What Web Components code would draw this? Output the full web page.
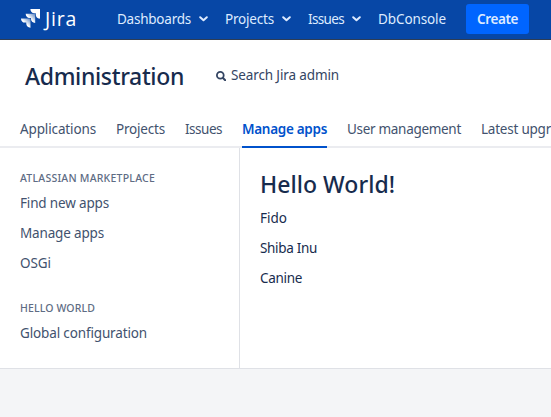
<!DOCTYPE html>
<html lang="en">
<head>
<meta charset="utf-8">
<title>Administration - Jira</title>
<style>
html,body{margin:0;height:100%;overflow:hidden;background:#f4f5f7}
body{font:13.5px/20px "Noto Sans","Open Sans",sans-serif;color:#172b4d}
</style>
</head>
<body>
<jira-page></jira-page>
<script>
const define = (name, html, setup) => customElements.define(name, class extends HTMLElement {
  connectedCallback() {
    if (this.shadowRoot) return;
    const t = document.createElement('template');
    t.innerHTML = html;
    this.attachShadow({mode: 'open'}).append(t.content.cloneNode(true));
    if (setup) setup(this);
  }
});

// Label whose tracking is adjusted so that the text fills the given width.
define('fit-label', `<style>:host{display:block;white-space:nowrap;flex:none}span{display:inline-block}</style><span><slot></slot></span>`, el => {
  const w = +el.getAttribute('w'), s = el.shadowRoot.querySelector('span');
  const d = w - s.getBoundingClientRect().width;
  s.style.letterSpacing = (d / el.textContent.length) + 'px';
  el.style.width = w + 'px';
});

define('jira-logo', `<style>:host{display:flex;gap:5px;width:57px;height:20px;flex:none;color:#fff;font:500 19.500px/20px "Open Sans","Noto Sans",sans-serif}svg{display:block;flex:none}
</style><svg width="19" height="20" viewBox="0 0 19 20">
<defs><linearGradient id="g" x1="1" y1="0" x2="0.25" y2="0.75"><stop offset="0" stop-color="#fff" stop-opacity=".3"/><stop offset=".7" stop-color="#fff"/></linearGradient></defs>
<path fill="#fff" d="M9.400 0H19v9.300a.6.6 0 0 1-.5.4C16.300 9.500 14.800 8 14.800 5.700V4.200h-1.500C11 4.200 9.400 2.500 9.400 0z"/>
<path fill="url(#g)" d="M4.700 4.700h9.500V14c-2.500-.2-4.200-1.700-4.200-4V8.900H8.600C6.300 8.900 4.700 7.200 4.700 4.700z"/>
<path fill="url(#g)" d="M0 9.400h9.500v9.300c-2.500-.2-4.200-1.700-4.200-4v-1.100H3.900C1.600 13.600 0 11.900 0 9.400z"/></svg><fit-label w="32">Jira</fit-label>`);

define('nav-item', `<style>:host{display:flex;align-items:center;gap:8px;flex:none}svg{display:none}:host([menu]) svg{display:block}</style><slot></slot><svg width="9" height="6" viewBox="0 0 9 6"><path d="M1.200 1.200l3.300 3 3.300-3" fill="none" stroke="#deebff" stroke-width="2" stroke-linecap="round" stroke-linejoin="round"/></svg>`);

define('create-button', `<style>:host{display:flex;align-items:center;justify-content:center;box-sizing:border-box;width:63px;height:30px;border-radius:3px;background:#0065ff;font-weight:600;flex:none}</style><slot></slot>`);

define('app-header', `<style>:host{display:flex;align-items:center;box-sizing:border-box;height:40px;padding:0 0 1px 21px;background:#0747a6;border-bottom:1px solid #2e3d54;color:#deebff}
nav{display:flex;gap:17px;margin-left:39px}create-button{margin-left:20px}</style>
<jira-logo></jira-logo><nav><nav-item menu><fit-label w="74">Dashboards</fit-label></nav-item><nav-item menu><fit-label w="49">Projects</fit-label></nav-item><nav-item menu><fit-label w="36">Issues</fit-label></nav-item><nav-item><fit-label w="68">DbConsole</fit-label></nav-item></nav><create-button><fit-label w="41">Create</fit-label></create-button>`);

define('admin-title', `<style>:host{display:flex;height:70px;padding-left:25px;background:#fff;box-sizing:border-box}
h1{margin:22px 0 0;font-size:23px;line-height:28px;font-weight:500}
.s{display:flex;gap:5px;margin:25px 0 0 32px;color:#344563}svg{margin-top:6px}</style>
<h1><fit-label w="159">Administration</fit-label></h1><div class="s"><svg width="10" height="10" viewBox="0 0 10 10" fill="none" stroke="#344563"><circle cx="4.300" cy="4.300" r="3.400" stroke-width="1.800"/><path d="M7 7l2.200 2.200" stroke-width="2" stroke-linecap="round"/></svg><fit-label w="108">Search Jira admin</fit-label></div>`);

define('admin-tab', `<style>:host{display:block;height:38px;box-sizing:border-box;padding-top:9px;color:#42526e;border-bottom:2px solid #ebecf0;flex:none}:host([active]){color:#0052cc;font-weight:600;border-color:#0052cc}</style><slot></slot>`);

define('admin-tabs', `<style>:host{display:flex;gap:20px;height:38px;padding-left:20px;background:#fff;box-shadow:inset 0 -2px #ebecf0;overflow:hidden}</style>
<admin-tab><fit-label w="76">Applications</fit-label></admin-tab><admin-tab><fit-label w="49">Projects</fit-label></admin-tab><admin-tab><fit-label w="37">Issues</fit-label></admin-tab><admin-tab active><fit-label w="85">Manage apps</fit-label></admin-tab><admin-tab><fit-label w="114">User management</fit-label></admin-tab><admin-tab><fit-label w="70">Latest upgr</fit-label></admin-tab>`);

define('side-group', `<style>:host{display:flex;flex-direction:column;gap:10px;color:#42526e}h2{margin:0 0 -5px;font-size:10.500px;line-height:20px;font-weight:500;color:#5e6c84}</style><h2><slot name="title"></slot></h2><slot></slot>`);

define('admin-sidebar', `<style>:host{display:flex;flex-direction:column;gap:25px;width:240px;box-sizing:border-box;padding:20px 0 0 20px;border-right:1px solid #dfe1e6;flex:none}</style>
<side-group><fit-label slot="title" w="135">ATLASSIAN MARKETPLACE</fit-label><fit-label w="89">Find new apps</fit-label><fit-label w="84">Manage apps</fit-label><fit-label w="31">OSGi</fit-label></side-group>
<side-group><fit-label slot="title" w="75">HELLO WORLD</fit-label><fit-label w="127">Global configuration</fit-label></side-group>`);

define('page-content', `<style>:host{display:flex;flex-direction:column;gap:10px;padding:22px 0 0 20px}h2{margin:0;font-size:23px;line-height:28px;font-weight:500}</style>
<h2><fit-label w="135">Hello World!</fit-label></h2><fit-label w="27">Fido</fit-label><fit-label w="57">Shiba Inu</fit-label><fit-label w="42">Canine</fit-label>`);

define('jira-page', `<style>:host{display:block;width:551px;overflow:hidden}main{display:flex;height:221px;box-sizing:border-box;background:#fff;border-bottom:1px solid #dfe1e6}</style>
<app-header></app-header><admin-title></admin-title><admin-tabs></admin-tabs><main><admin-sidebar></admin-sidebar><page-content></page-content></main>`);
</script>
</body>
</html>
